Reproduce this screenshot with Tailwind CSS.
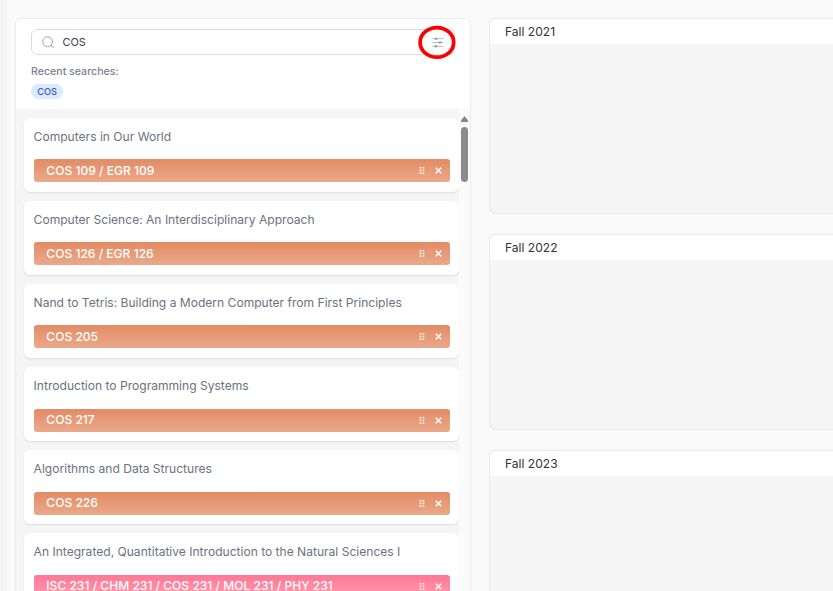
<!DOCTYPE html>
<html lang="en">
<head>
<meta charset="utf-8">
<title>Course planner</title>
<script src="https://cdn.jsdelivr.net/npm/@tailwindcss/browser@4"></script>
</head>
<body class="h-[591px] w-[833px] overflow-hidden bg-[#fafafa] font-['Inter',sans-serif]">
<svg class="hidden">
  <symbol id="grip" viewBox="0 0 6 9"><g fill="#fff" fill-opacity=".85"><rect x=".5" y=".9" width="1.8" height="1.6"/><rect x="3.5" y=".9" width="1.8" height="1.6"/><rect x=".5" y="3.6" width="1.8" height="1.6"/><rect x="3.5" y="3.6" width="1.8" height="1.6"/><rect x=".5" y="6.3" width="1.8" height="1.6"/><rect x="3.5" y="6.3" width="1.8" height="1.6"/></g></symbol>
  <symbol id="cross" viewBox="0 0 7 7"><path d="M.8.8l5.4 5.4M6.2.8L.8 6.2" stroke="#fff" stroke-width="1.5" fill="none"/></symbol>
</svg>
<div class="flex h-full overflow-hidden">
  <div class="w-[7px] shrink-0 bg-[#f5f5f5]"></div>
  <section class="mt-[18px] ml-2 flex h-[600px] w-[456px] shrink-0 flex-col overflow-hidden rounded-t-md border border-[#ececee] bg-[#f5f5f5]">
    <header class="relative h-[90px] shrink-0 bg-white pt-[10px] pl-[15px]">
      <div class="flex h-[26px] w-[424px] items-center rounded-md border border-[#d9dce2] pl-[10px]">
        <svg class="size-[13px]" viewBox="0 0 13 13" fill="none" stroke="#9ca3af" stroke-width="1" stroke-linecap="round"><circle cx="5.6" cy="5.7" r="4.9"/><path d="M9.2 9.3l2.4 2.5"/></svg>
        <span class="ml-[7.5px] text-[10.9px] leading-none text-[#374151]">COS</span>
        <svg class="mr-[10px] ml-auto h-[11px] w-3" viewBox="0 0 12 11" fill="none" stroke="#a9afba" stroke-width=".9"><path d="M.5 1.7h11M.5 5.5h11M.5 9.3h11"/><g fill="#9ca3af" stroke="none"><circle cx="4" cy="1.7" r="1.3"/><circle cx="8" cy="5.5" r="1.3"/><circle cx="4" cy="9.3" r="1.3"/></g></svg>
      </div>
      <svg class="absolute top-[6px] left-[402px] h-[35px] w-[38px]" viewBox="0 0 38 35"><ellipse cx="18.9" cy="17.4" rx="16.8" ry="14.8" fill="none" stroke="#f00" stroke-width="3.7"/></svg>
      <p class="mt-[10px] text-[10.6px] leading-[14px] font-medium text-[#7b8290]">Recent searches:</p>
      <span class="mt-[5px] flex h-[15px] w-8 items-center justify-center rounded-full bg-[#dbeafe] text-[9.2px] leading-none font-medium text-[#3b55c4]">COS</span>
    </header>
    <div class="flex min-h-0 flex-1">
      <div id="courses" class="flex w-[443px] shrink-0 flex-col gap-[9.1px] pt-[9px] pl-2"></div>
      <div class="flex flex-1 flex-col items-center bg-[#fbfbfb] pt-[7px] pr-px">
        <svg class="h-[6px] w-[7px]" viewBox="0 0 7 6"><path d="M3.5 0L7 4.5V6H0V4.5z" fill="#858585"/></svg>
        <div class="mt-[5px] h-[55px] w-[7px] rounded-full bg-[#8b8b8b]"></div>
      </div>
    </div>
  </section>
  <main id="terms" class="mt-[18px] ml-[18px] flex w-[360px] shrink-0 flex-col gap-[19.8px]"></main>
</div>
<script>
const orange = 'bg-linear-to-b from-[#e38b64] to-[#eaa98a]';
const pink = 'bg-linear-to-b from-[#ff7896] to-[#ff9ab1]';
const courses = [
  ['Computers in Our World', 'COS 109 / EGR 109', orange],
  ['Computer Science: An Interdisciplinary Approach', 'COS 126 / EGR 126', orange],
  ['Nand to Tetris: Building a Modern Computer from First Principles', 'COS 205', orange],
  ['Introduction to Programming Systems', 'COS 217', orange],
  ['Algorithms and Data Structures', 'COS 226', orange],
  ['An Integrated, Quantitative Introduction to the Natural Sciences I', 'ISC 231 / CHM 231 / COS 231 / MOL 231 / PHY 231', pink],
];
document.getElementById('courses').innerHTML = courses.map(([title, code, color]) => `
<article class="h-[74px] w-[435px] shrink-0 rounded-md bg-white pt-[9.5px] pl-[10px] shadow-[0_1px_2px_rgba(0,0,0,0.1)]">
  <h3 class="-ml-[0.4px] text-[12.07px] leading-[18px] whitespace-nowrap text-[#6b7280]">${title}</h3>
  <div class="mt-[13.8px] flex h-[23px] w-[416px] items-center rounded-[3px] pr-2 pl-[12.3px] text-[12.07px] leading-none font-medium text-white ${color}">
    <span>${code}</span>
    <svg class="ml-auto h-[9px] w-[6px]"><use href="#grip"/></svg>
    <svg class="ml-[10px] size-[7px]"><use href="#cross"/></svg>
  </div>
</article>`).join('');
document.getElementById('terms').innerHTML = ['Fall 2021', 'Fall 2022', 'Fall 2023'].map(term => `
<section class="h-[196px] shrink-0 overflow-hidden rounded-md border border-[#e9e9ea] bg-[#f5f5f5]">
  <h2 class="h-[25px] bg-white pl-[15px] text-[12.07px] leading-[26px] text-[#333]">${term}</h2>
</section>`).join('');
</script>
</body>
</html>
